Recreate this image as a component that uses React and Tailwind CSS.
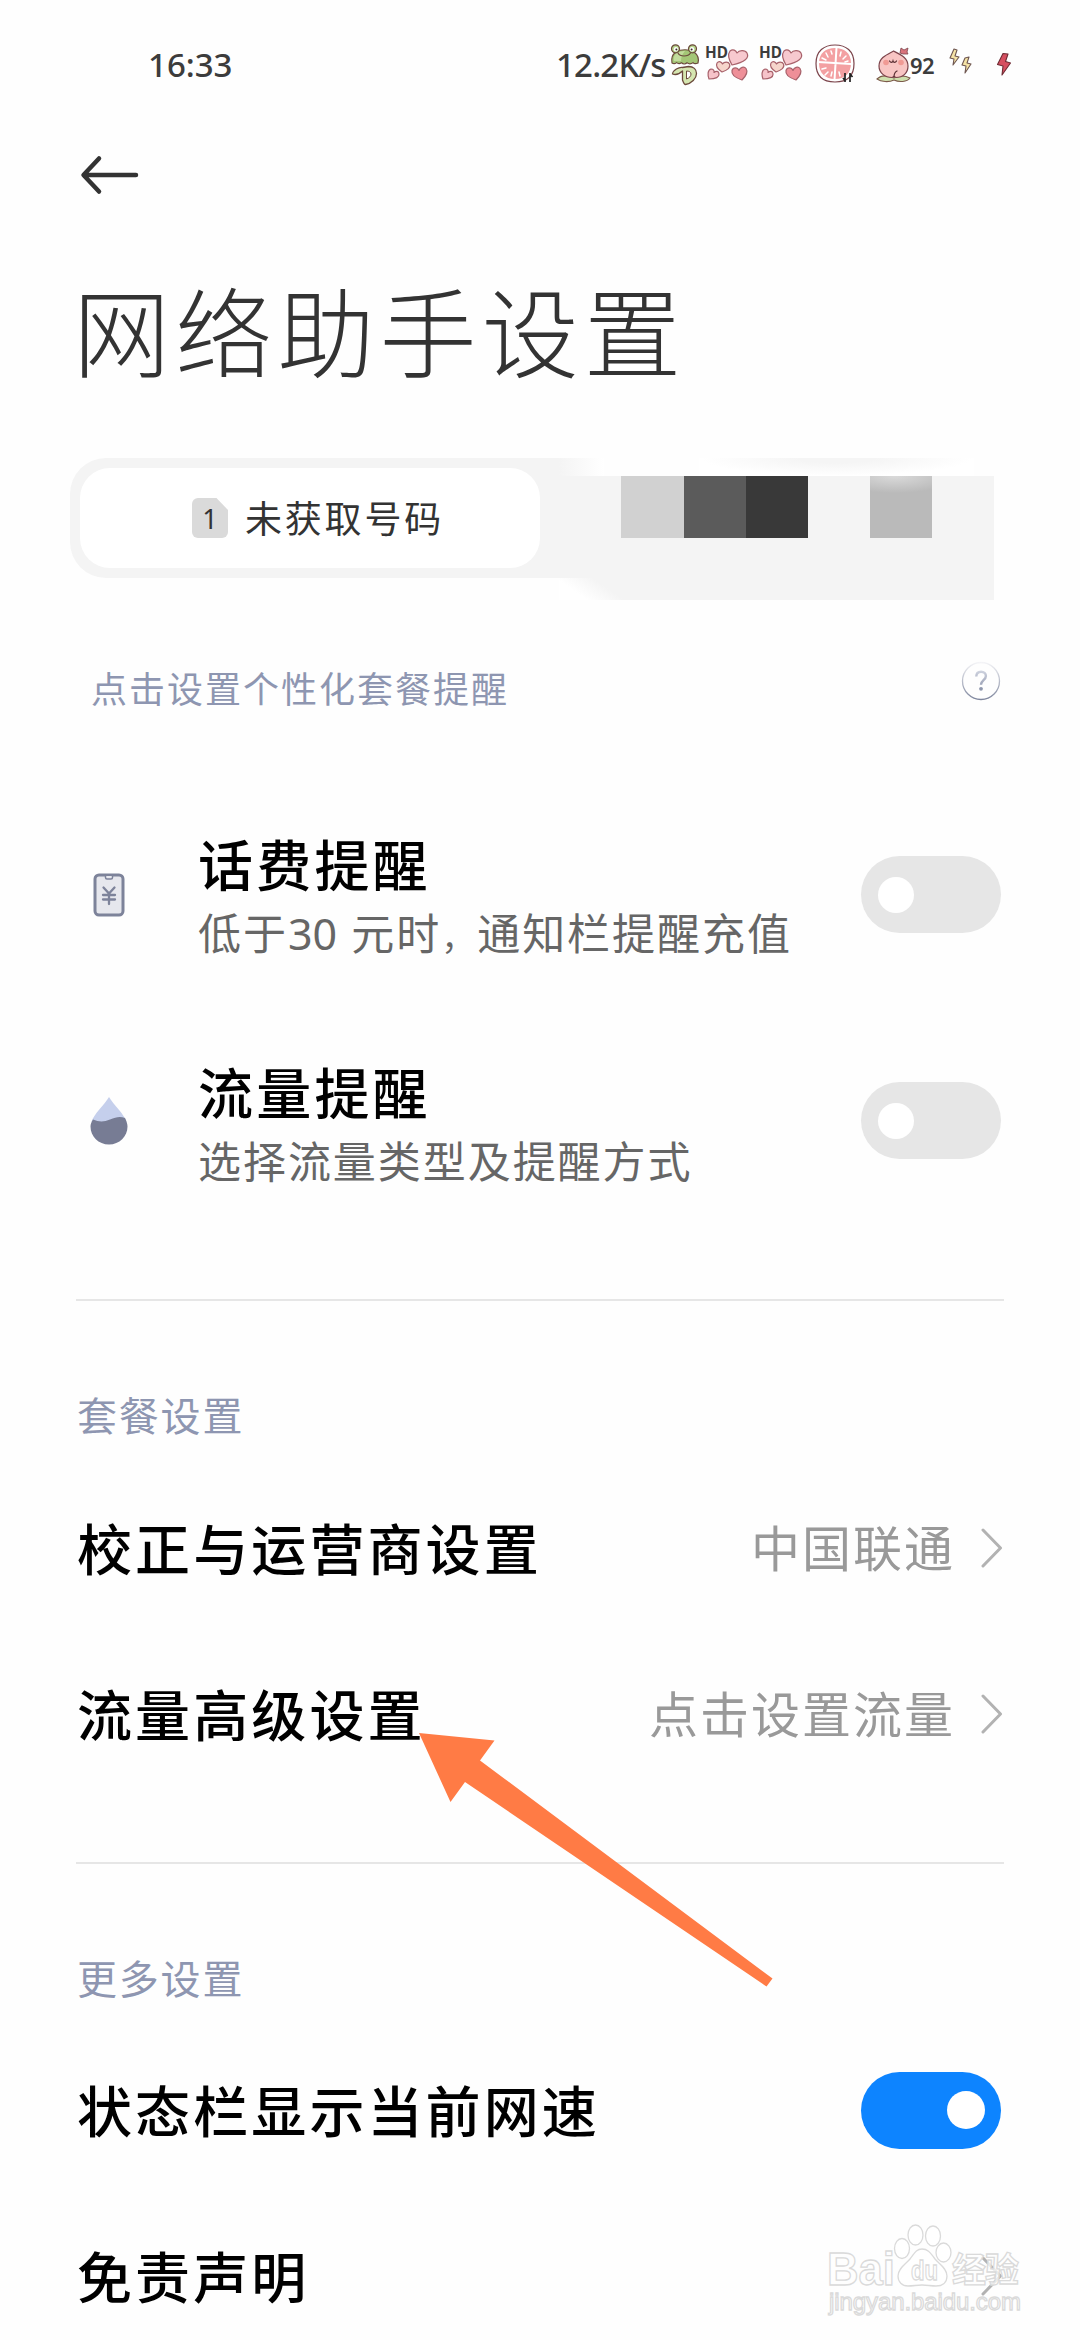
function Heart({ d, fill }) {
  return <path d={d} fill={fill} stroke="#a8626b" strokeWidth="1.2" strokeLinejoin="round" />;
}

function Frog() {
  return (
    <svg className="h-11 w-8" viewBox="0 0 32 44" fill="none">
      <path d="M13.5 24.500C10 24 4 27 3.500 31c3 1 7 0 10-3v9c1 3 2 4.500 3 4.500 6-1 11-6 11-11 0-4-3-7-8-7z" fill="#d5e6b0" stroke="#6b4a3c" strokeWidth="1.300" strokeLinejoin="round" />
      <path d="M17.500 28v8c3-1 4.500-3 4.500-5s-2-3-4.500-3z" fill="#fff" stroke="#6b4a3c" strokeWidth="1" />
      <path d="M3 20c-1-5 1-9 4-11 5-3 13-3 18 0 4 3 5 7 4 11-2 1-4 .8-5-.4-2 1.600-4 1.600-6 .2-1.500 1.400-4 1.400-5.500 0-2 1.200-3.500 1-5-.2C6 21 4.500 21 3 20z" fill="#a4c676" stroke="#6b4a3c" strokeWidth="1.200" />
      <path d="M5 18c-1-4 1-8 5-9 3-1 5-1 6-1-3 3-4 7-4 10z" fill="#c3dc9d" />
      <circle cx="6.500" cy="5.800" r="4" fill="#b6d48b" stroke="#6b4a3c" strokeWidth="1.200" />
      <circle cx="23.500" cy="5.800" r="4" fill="#b6d48b" stroke="#6b4a3c" strokeWidth="1.200" />
      <circle cx="7" cy="6.200" r="2.200" fill="#fff" />
      <circle cx="23" cy="6.200" r="2.200" fill="#fff" />
      <circle cx="7.400" cy="6.400" r="1" fill="#3c2c26" />
      <circle cx="22.600" cy="6.400" r="1" fill="#3c2c26" />
      <path d="M9 10c2 4 10 4 12.500 0" stroke="#6b4a3c" strokeWidth="1.200" strokeLinecap="round" />
    </svg>
  );
}

function HdHearts() {
  return (
    <svg className="h-11 w-[54px] overflow-visible" viewBox="0 0 54 44" fill="none">
      <text x="4" y="14.600" fontFamily="'Noto Sans', sans-serif" fontWeight="700" fontSize="16.500" fill="#3c3c3c" textLength="23" lengthAdjust="spacingAndGlyphs">HD</text>
      <Heart d="M31 22c-3-5-5-10-2-14 3-2.500 6-.5 7 2 2-3 8-3.500 10 0 2.500 5-2 9-15 12z" fill="#f7c9cf" />
      <Heart d="M21 29c-3-2-7-5-5-9 2-2.500 5-1 5.500 1 1.500-2.500 6-2.500 7 0 1.500 3.500-2 6-7.500 8z" fill="#f6d5cb" />
      <Heart d="M8 36c-1.500-4-1.500-9 2-10 2.500 0 3.500 2 3 3.500 2-2 5-1.500 5 1.500 .3 3-3 5-10 5z" fill="#f6c3c9" />
      <Heart d="M41 37c-6-2-11-5-10-9.500 1-3.500 5.500-3.500 7 0 1-3 5-4.500 7-2 2 3 .5 7-4 11.500z" fill="#ee8f98" />
    </svg>
  );
}

function Grapefruit() {
  return (
    <svg className="ml-[5px] h-11 w-[42px]" viewBox="0 0 42 44" fill="none">
      <path d="M21 2c11 0 19 6 19 18.500S33 39 21 39 2 33 2 20.500 10 2 21 2z" fill="#fff" stroke="#7c444b" strokeWidth="1.200" />
      <path d="M21 5c9 0 16 5 16 15s-6 16-16 16S5 30 5 20 12 5 21 5z" fill="#f3a0a2" />
      <path d="M22.500 5l-2 32M4 19l33 2" stroke="#fff" strokeWidth="2" />
      <path d="M12 10l2 4M17 8l1 3M27 9l-1 4M32 13l-3 3M8 15l4 2M34 18l-3 1M8 26l4-1M11 32l3-3M17 33l1-4M26 33l-1-4" stroke="#fff" strokeWidth="1.500" strokeLinecap="round" />
      <path d="M31 30v9M29 35l2.500 3M36 39v-9M38.500 34L36 31" stroke="#222" strokeWidth="1.700" />
    </svg>
  );
}

function Peach() {
  return (
    <svg className="ml-5 h-11 w-[36px]" viewBox="0 0 36 44" fill="none">
      <path d="M1 36c4-4 10-4 17-1 6-3 12-2 16 0-3 4-11 4.500-16 2C13 39.500 5 39 1 36z" fill="#cfe0ae" stroke="#7c5a4a" strokeWidth="1.100" />
      <path d="M17.500 8c8 4 14.500 7 14.500 15 0 7-5 11.500-12 11.500l-2-1-2 1C9 34.500 3 30 3 23 3 15 10 12 17.500 8z" fill="#f8c5c3" stroke="#7c444b" strokeWidth="1.200" />
      <path d="M24 10l1-5 3 2 4-2-1 4 1 2h-5z" fill="#d9737c" stroke="#7c444b" strokeWidth=".800" />
      <circle cx="10" cy="19.500" r="2.800" fill="#f09a94" />
      <circle cx="25" cy="19.500" r="2.800" fill="#f09a94" />
      <path d="M13.500 18c1 1.800 3 1.800 3.500 0 .5 1.800 2.500 1.800 3.500 0M18 34c0-3 1-5 3-6" stroke="#5a2f33" strokeWidth="1.200" strokeLinecap="round" />
    </svg>
  );
}

function SmallBolts() {
  return (
    <svg className="ml-[14px] h-11 w-6" viewBox="0 0 24 44" fill="none">
      <path d="M5 6l-4 9 4 1-1 6 6-8-4-1 2-6z" fill="#f5e3a6" stroke="#6e5650" strokeWidth="1.100" strokeLinejoin="round" />
      <path d="M16 15l-3 7 4 1-1 7 6-9-4-1 2-6z" fill="#f5e3a6" stroke="#6e5650" strokeWidth="1.100" strokeLinejoin="round" />
    </svg>
  );
}

function ChargeBolt() {
  return (
    <svg className="ml-[23px] h-11 w-4" viewBox="0 0 16 44" fill="none">
      <path d="M7 10.500L1.500 21.500l5.500 1.500-1 9 8.500-12-5-1.500L12 11z" fill="#d64f60" stroke="#6e2c34" strokeWidth="1.100" strokeLinejoin="round" />
    </svg>
  );
}

function StatusBar() {
  return (
    <div className="flex h-[130px] shrink-0 items-center pl-[148px] font-['Noto_Sans',sans-serif] text-[#3c3c3c]">
      <span className="-mt-px w-[88px] text-[33px] font-medium leading-none">16:33</span>
      <span className="-mt-px ml-[320px] w-[113px] whitespace-nowrap text-[33px] font-medium leading-none tracking-[-0.8px]">12.2K/s</span>
      <Frog />
      <HdHearts />
      <HdHearts />
      <Grapefruit />
      <Peach />
      <span className="-ml-[2px] w-[25px] text-[22px] font-semibold leading-none tracking-[-0.5px]">92</span>
      <SmallBolts />
      <ChargeBolt />
    </div>
  );
}

function Toggle({ on }) {
  return on ? (
    <div className="flex h-[77px] w-[140px] items-center justify-end rounded-full bg-[#0d84ff] pr-4">
      <div className="size-[38px] rounded-full bg-white" />
    </div>
  ) : (
    <div className="flex h-[77px] w-[140px] items-center rounded-full bg-[#e6e6e6] pl-[17px]">
      <div className="size-9 rounded-full bg-white" />
    </div>
  );
}

function Chevron() {
  return (
    <svg className="ml-[26px] h-10 w-[22px]" viewBox="0 0 22 40" fill="none">
      <path d="M2 2l17.500 18L2 38" stroke="#b2b2b2" strokeWidth="3" strokeLinecap="round" strokeLinejoin="round" />
    </svg>
  );
}

function SimTabs() {
  return (
    <div className="ml-[70px] mt-[22px] flex h-[142px] w-[924px] shrink-0 items-start">
      <div className="h-[120px] w-[489px] rounded-l-[36px] bg-[#f4f4f4] p-[10px]">
        <div className="flex h-[100px] w-[460px] items-center rounded-[30px] bg-white pl-[112px]">
          <div className="flex h-10 w-9 items-center justify-center rounded-[6px] bg-[#dadada] font-['Noto_Sans',sans-serif] text-[27px] leading-none text-[#333] [clip-path:polygon(0_0,68%_0,100%_30%,100%_100%,0_100%)]">1</div>
          <span className="-mt-[2px] ml-[17px] text-[37px] leading-none tracking-[2.8px] text-[#333]">未获取号码</span>
        </div>
      </div>
      <div className="flex h-[142px] w-[435px] flex-col">
        <div className="flex h-[18px]">
          <div className="w-[45px] bg-linear-to-r from-[#f4f4f4] to-white" />
          <div className="ml-[95px] w-[275px] bg-[radial-gradient(ellipse_at_top,#f5f5f5_20%,#ffffff_70%)]" />
        </div>
        <div className="flex h-[62px] bg-[#f4f4f4] pl-[62px]">
          <div className="w-[63px] bg-[#d1d1d1]" />
          <div className="w-[62px] bg-[#5b5b5b]" />
          <div className="w-[62px] bg-[#393939]" />
          <div className="ml-[62px] w-[62px] bg-[radial-gradient(ellipse_60px_17px_at_40%_0%,#dadada_0%,#bababa_100%)]" />
        </div>
        <div className="h-10 bg-[#f4f4f4]" />
        <div className="h-[22px] bg-[linear-gradient(35deg,#ffffff_6%,#f4f4f4_14%)]" />
      </div>
    </div>
  );
}

function HelpIcon() {
  return (
    <svg className="mb-3 size-10" viewBox="0 0 40 40" fill="none">
      <defs>
        <linearGradient id="help" x1="0" y1="0" x2="0" y2="40" gradientUnits="userSpaceOnUse">
          <stop offset="0" stopColor="#f8f8fa" />
          <stop offset="1" stopColor="#7a829a" />
        </linearGradient>
        <linearGradient id="mark" x1="0" y1="8" x2="0" y2="30" gradientUnits="userSpaceOnUse">
          <stop offset="0" stopColor="#d5d9e4" />
          <stop offset="1" stopColor="#8990a8" />
        </linearGradient>
      </defs>
      <circle cx="20" cy="20" r="18.500" stroke="url(#help)" strokeWidth="1.300" />
      <path d="M15.300 15.500c0-3 2-4.800 4.800-4.800s4.800 1.800 4.800 4.300c0 4-4.900 4.500-4.900 8.700" stroke="url(#mark)" strokeWidth="2.400" />
      <circle cx="20" cy="27.800" r="1.900" fill="#8f97ad" />
    </svg>
  );
}

function BillIcon() {
  return (
    <svg className="h-[44px] w-8" viewBox="0 0 32 44" fill="none" stroke="#7d839a">
      <rect x="2" y="2" width="28" height="40" rx="4" fill="#e6e7ed" strokeWidth="3" />
      <path d="M12.500 3v1.500a1.500 1.500 0 001.500 1.500h4a1.500 1.500 0 001.500-1.500V3" fill="#e6e7ed" strokeWidth="1.500" />
      <path d="M10.500 14.500l5.500 6 5.500-6M16 20.500v10.500M10 22h12M10 26.500h12" strokeWidth="2.300" strokeLinecap="round" />
    </svg>
  );
}

function DropIcon() {
  return (
    <svg className="h-12 w-[38px]" viewBox="0 0 38 48">
      <path d="M19 0C15 7 3 18 1.500 25h35C35 18 23 7 19 0z" fill="#c5cfec" />
      <path d="M3 22.500C9 25 14 25 20 22.500s10-3.500 15-1.500C36.500 24 37.500 27 37.500 29.500c0 10-8 18-18.500 18S.5 39.500.5 29.500C.5 27 1.500 25 3 22.500z" fill="#777c94" />
    </svg>
  );
}

function ReminderRow({ icon, title, detail, className }) {
  return (
    <div className={`flex shrink-0 items-center pl-[90px] pr-[79px] ${className}`}>
      <div className="flex w-[38px] justify-center">{icon}</div>
      <div className="ml-[70px] flex-1 whitespace-nowrap pt-[9px]">
        <div className="text-[55px] font-medium leading-[69px] tracking-[3.2px] text-black">{title}</div>
        <div className="text-[43px] leading-[69px] tracking-[1.950px] text-[#666]">{detail}</div>
      </div>
      <Toggle />
    </div>
  );
}

function SettingRow({ title, value, children }) {
  return (
    <div className="flex h-[166px] shrink-0 items-center pl-[77px] pr-[77px]">
      <span className="-mt-[3px] flex-1 text-[55px] font-medium leading-none tracking-[3.100px] text-black">{title}</span>
      {value && <span className="-mt-[5px] text-[49px] leading-none tracking-[2px] text-[#999]">{value}</span>}
      {children}
    </div>
  );
}

function SectionTitle({ children, className }) {
  return <div className={`shrink-0 pl-[77px] pt-[62px] text-[40px] tracking-[1.800px] text-[#8e96b1] ${className}`}>{children}</div>;
}

function Pointer() {
  return (
    <svg className="absolute left-[410px] top-[1725px] h-[270px] w-[370px]" viewBox="410 1725 370 270">
      <path d="M419 1733L494.500 1740.500 480 1760.500 772.500 1978.500 766.500 1986.500 465 1782 450.500 1802z" fill="#ff7b45" />
    </svg>
  );
}

function Watermark() {
  return (
    <svg className="absolute left-[820px] top-[2215px] h-[110px] w-[210px]" viewBox="820 2215 210 110" fill="#fff" fillOpacity=".75" stroke="#dadada" strokeWidth="1.300" fontFamily="'Liberation Sans', sans-serif">
      <text x="827" y="2285" fontSize="46" fontWeight="700" textLength="68" lengthAdjust="spacingAndGlyphs">Bai</text>
      <ellipse cx="902" cy="2248.500" rx="7.500" ry="10" />
      <ellipse cx="915.500" cy="2235" rx="7.500" ry="10" />
      <ellipse cx="933" cy="2236" rx="7.500" ry="10" />
      <ellipse cx="943.500" cy="2252.500" rx="7.500" ry="9.500" />
      <path d="M922 2249c7 0 9 5 13 10s12 9 12 17c0 7-5 10-11 10-5 0-9-1-14-1s-9 1-14 1c-6 0-10-4-10-10 0-8 8-12 12-17s6-10 12-10z" />
      <text x="911" y="2280" fontSize="28" fontWeight="700" textLength="27" lengthAdjust="spacingAndGlyphs">du</text>
      <text x="952" y="2282" fontSize="34" fontWeight="700" fontFamily="'Noto Sans CJK SC', sans-serif" textLength="67">经验</text>
      <text x="829" y="2310" fontSize="24" textLength="192">jingyan.baidu.com</text>
    </svg>
  );
}

export default function App() {
  return (
    <div className="relative flex h-[2340px] w-[1080px] flex-col overflow-hidden bg-[#fefefe] font-['Noto_Sans_CJK_SC',sans-serif]">
      <StatusBar />
      <div className="flex h-[90px] shrink-0 items-center pl-20">
        <svg className="h-10 w-[60px]" viewBox="0 0 60 40" fill="none" stroke="#333" strokeWidth="4.500" strokeLinecap="round" strokeLinejoin="round">
          <path d="M19 3.500L3.500 20 19 36.500M4 20h52" />
        </svg>
      </div>
      <h1 className="h-[216px] shrink-0 pl-[73px] text-[97px] font-light leading-[216px] tracking-[5.200px] text-[#333]">网络助手设置</h1>
      <SimTabs />
      <div className="flex h-[181px] shrink-0 items-center justify-between pb-[7px] pl-[91px] pr-[79px]">
        <span className="text-[36px] leading-none tracking-[2px] text-[#8e96b1]">点击设置个性化套餐提醒</span>
        <HelpIcon />
      </div>
      <ReminderRow
        className="h-[227px]"
        icon={<BillIcon />}
        title="话费提醒"
        detail={
          <>
            低于<span className="font-['Noto_Sans',sans-serif] tracking-normal">30 </span>
            <span className="pl-[3px]">元时</span>
            <span className="inline-block w-[36px] text-[34px] tracking-normal">，</span>通知栏提醒充值
          </>
        }
      />
      <ReminderRow className="h-[225px]" icon={<DropIcon />} title="流量提醒" detail="选择流量类型及提醒方式" />
      <div className="ml-[76px] mt-[66px] h-[2px] w-[928px] shrink-0 bg-[#e6e6e6]" />
      <SectionTitle className="h-[164px] leading-[102px]">套餐设置</SectionTitle>
      <SettingRow title="校正与运营商设置" value="中国联通">
        <Chevron />
      </SettingRow>
      <SettingRow title="流量高级设置" value="点击设置流量">
        <Chevron />
      </SettingRow>
      <div className="ml-[76px] mt-[65px] h-[2px] w-[928px] shrink-0 bg-[#e6e6e6]" />
      <SectionTitle className="h-[163px] leading-[102px]">更多设置</SectionTitle>
      <SettingRow title="状态栏显示当前网速">
        <div className="mr-[2px]">
          <Toggle on />
        </div>
      </SettingRow>
      <SettingRow title="免责声明">
        <Chevron />
      </SettingRow>
      <Pointer />
      <Watermark />
    </div>
  );
}
